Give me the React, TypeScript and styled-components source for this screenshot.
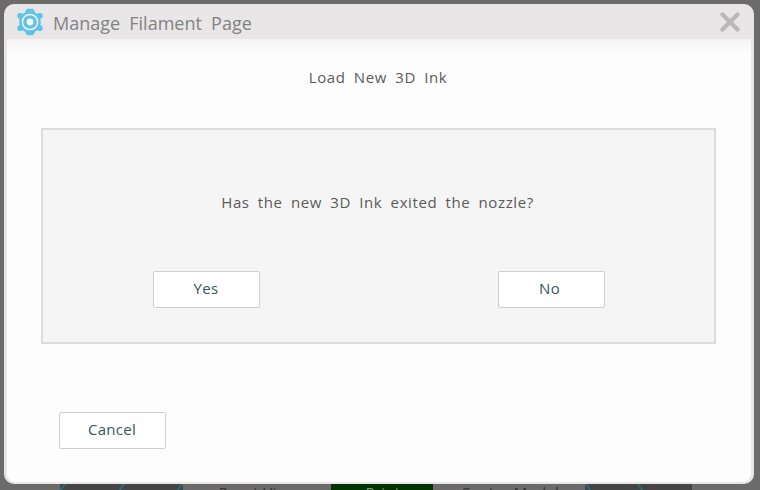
import styled, { createGlobalStyle } from 'styled-components';

const GlobalStyle = createGlobalStyle`
    html, body {
        margin: 0;
        padding: 0;
        width: 760px;
        height: 490px;
        overflow: hidden;
        background: #6b6b6b;
        font-family: 'Open Sans', 'Noto Sans', sans-serif;
    }
`;

const GearIcon = () => (
    <svg width="26" height="28" viewBox="0 0 26 28">
        <g fill="#5ec4e6">
            <path d="M10 0.8 H16 L18 4 H8 Z" />
            <path d="M10 27.2 H16 L18 24 H8 Z" />
            <circle cx="3.2" cy="7.8" r="2.9" />
            <circle cx="22.8" cy="7.8" r="2.9" />
            <circle cx="3.2" cy="20.2" r="2.9" />
            <circle cx="22.8" cy="20.2" r="2.9" />
            <circle cx="13" cy="14" r="10.8" />
        </g>
        <circle cx="13" cy="14" r="7.6" fill="none" stroke="#f2f2f2" strokeWidth="1.5" />
        <circle cx="13" cy="14" r="3.4" fill="#f6f6f6" />
    </svg>
);

const CloseIcon = () => (
    <svg width="20" height="20" viewBox="0 0 20 20">
        <path d="M2.5 2.5 L17.5 17.5 M17.5 2.5 L2.5 17.5" stroke="#b9b9b9" strokeWidth="4.4" strokeLinecap="round" />
    </svg>
);

export default function App() {
    return (
        <SPage>
            <GlobalStyle />
            <SDialog>
                <STitleBar>
                    <GearIcon />
                    <STitle>Manage Filament Page</STitle>
                    <SClose>
                        <CloseIcon />
                    </SClose>
                </STitleBar>
                <SBody>
                    <SHeading>Load New 3D Ink</SHeading>
                    <SPanel>
                        <SQuestion>Has the new 3D Ink exited the nozzle?</SQuestion>
                        <SChoices>
                            <SButton>Yes</SButton>
                            <SButton $inset={4}>No</SButton>
                        </SChoices>
                    </SPanel>
                    <SFooter>
                        <SButton>Cancel</SButton>
                    </SFooter>
                </SBody>
            </SDialog>
            <SToolbar>
                <SToolbarGroup $width={123}>
                    <SSliver />
                    <SSliver />
                    <SSliver />
                </SToolbarGroup>
                <SToolbarItem $width={148}>Reset View</SToolbarItem>
                <SToolbarItem $width={102} $primary>Print</SToolbarItem>
                <SToolbarItem $width={152}>Center Model</SToolbarItem>
                <SToolbarGroup $width={107}>
                    <SSliver $back />
                    <SSliver $back />
                    <span />
                </SToolbarGroup>
            </SToolbar>
        </SPage>
    );
}

const SPage = styled.div`
    width: 760px;
    height: 490px;
    padding: 4px 6px 0 4px;
    box-sizing: border-box;
    overflow: hidden;
    background: #6b6b6b;
    display: flex;
    flex-direction: column;
`;

const SDialog = styled.div`
    height: 480px;
    flex-shrink: 0;
    box-sizing: border-box;
    padding: 0 3px 2px;
    border-radius: 10px;
    background: #e8e6e7;
    display: flex;
    flex-direction: column;
`;

const STitleBar = styled.div`
    height: 35px;
    flex-shrink: 0;
    padding: 0 0 0 10px;
    display: flex;
    align-items: center;
    gap: 10px;
`;

const STitle = styled.span`
    font-size: 18px;
    line-height: 24px;
    padding-top: 2px;
    word-spacing: 4.5px;
    color: #828282;
`;

const SClose = styled.div`
    margin-left: auto;
    margin-right: 11px;
    padding-top: 1px;
    display: flex;
`;

const SBody = styled.div`
    flex: 1;
    min-height: 0;
    border-radius: 0 0 8px 8px;
    background: linear-gradient(#f4f4f4 0, #fdfdfd 14px);
    padding: 28px 35px 0 34px;
    display: flex;
    flex-direction: column;
`;

const SHeading = styled.div`
    font-size: 15px;
    line-height: 20px;
    letter-spacing: 0.6px;
    word-spacing: 3.8px;
    color: #5a5a5a;
    text-align: center;
    padding-right: 1px;
`;

const SPanel = styled.div`
    margin-top: 41px;
    height: 216px;
    box-sizing: border-box;
    border: 2px solid #dcdcdc;
    background: #f5f5f5;
    padding: 62px 109px 0 110px;
    display: flex;
    flex-direction: column;
`;

const SQuestion = styled.div`
    font-size: 15px;
    line-height: 20px;
    letter-spacing: 0.6px;
    word-spacing: 3.8px;
    color: #5a5a5a;
    text-align: center;
    padding-right: 3px;
`;

const SChoices = styled.div`
    margin-top: 59px;
    display: flex;
    justify-content: space-between;
`;

const SButton = styled.button<{ $inset?: number }>`
    width: 107px;
    height: 37px;
    box-sizing: border-box;
    padding: 0 ${(p) => p.$inset ?? 1}px 4px 0;
    border: 1px solid #cfcfcf;
    border-radius: 2px;
    background: #ffffff;
    color: #37565a;
    font-family: inherit;
    font-size: 15px;
    letter-spacing: 0.3px;
`;

const SFooter = styled.div`
    margin-top: 68px;
    padding-left: 18px;
    display: flex;
`;

const SToolbar = styled.div`
    height: 6px;
    flex-shrink: 0;
    margin-left: 56px;
    display: flex;
    overflow: hidden;
`;

const SToolbarGroup = styled.div<{ $width: number }>`
    width: ${(p) => p.$width}px;
    flex-shrink: 0;
    padding: 0 2px;
    box-sizing: border-box;
    background: #454545;
    display: flex;
    justify-content: space-between;
`;

const SSliver = styled.span<{ $back?: boolean }>`
    width: 2px;
    height: 6px;
    background: #2f6f7a;
    transform: skewX(${(p) => (p.$back ? 35 : -35)}deg);
`;

const SToolbarItem = styled.div<{ $width: number; $primary?: boolean }>`
    width: ${(p) => p.$width}px;
    flex-shrink: 0;
    background: ${(p) => (p.$primary ? '#003300' : '#6b6b6b')};
    color: ${(p) => (p.$primary ? '#7f997f' : '#333333')};
    font-size: 15px;
    line-height: 16px;
    letter-spacing: 0.3px;
    text-align: center;
    padding-left: 2px;
    box-sizing: border-box;
`;
